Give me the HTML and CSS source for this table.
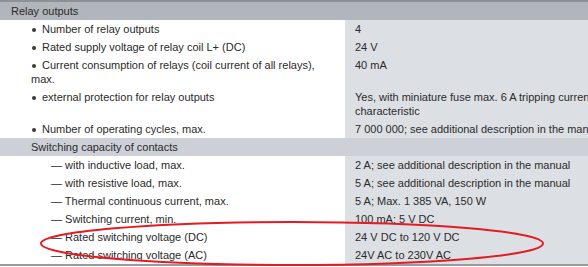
FILE: index.html
```html
<!DOCTYPE html>
<html>
<head>
<meta charset="utf-8">
<link rel="stylesheet" href="styles.css">
</head>
<body>
<div class="page">
<table class="spec">
  <colgroup><col class="c-name"><col class="c-val"></colgroup>
  <tr class="head"><td colspan="2" class="head-cell">Relay outputs</td></tr>
  <tr><td class="name bul"><span class="dot"></span>Number of relay outputs</td><td class="val">4</td></tr>
  <tr><td class="name bul"><span class="dot"></span>Rated supply voltage of relay coil L+ (DC)</td><td class="val">24 V</td></tr>
  <tr><td class="name bul"><span class="dot"></span>Current consumption of relays (coil current of all relays), max.</td><td class="val">40 mA</td></tr>
  <tr><td class="name bul"><span class="dot"></span>external protection for relay outputs</td><td class="val">Yes, with miniature fuse max. 6 A tripping current characteristic</td></tr>
  <tr><td class="name bul"><span class="dot"></span>Number of operating cycles, max.</td><td class="val">7 000 000; see additional description in the manual</td></tr>
  <tr class="sub"><td colspan="2" class="sub-cell">Switching capacity of contacts</td></tr>
  <tr><td class="name dash">— with inductive load, max.</td><td class="val">2 A; see additional description in the manual</td></tr>
  <tr><td class="name dash">— with resistive load, max.</td><td class="val">5 A; see additional description in the manual</td></tr>
  <tr><td class="name dash">— Thermal continuous current, max.</td><td class="val">5 A; Max. 1 385 VA, 150 W</td></tr>
  <tr><td class="name dash">— Switching current, min.</td><td class="val">100 mA; 5 V DC</td></tr>
  <tr><td class="name dash">— Rated switching voltage (DC)</td><td class="val">24 V DC to 120 V DC</td></tr>
  <tr><td class="name dash">— Rated switching voltage (AC)</td><td class="val">24V AC to 230V AC</td></tr>
</table>
<svg class="mark" width="588" height="267" viewBox="0 0 588 267">
  <ellipse cx="292" cy="243.5" rx="251" ry="21.5" fill="none" stroke="#e31b23" stroke-width="2"/>
</svg>
</div>
</body>
</html>
```

FILE: styles.css
```css
html, body {
  margin: 0;
  padding: 0;
  background: #ffffff;
  overflow: hidden;
}
.page {
  position: relative;
  width: 588px;
  height: 267px;
  overflow: hidden;
}
.spec {
  border-collapse: collapse;
  width: 625px;
  table-layout: fixed;
  font-family: "Liberation Sans", Arial, sans-serif;
  font-size: 11px;
  line-height: 14px;
  color: #2b2b2b;
  border-top: 2px solid #8d9096;
  border-bottom: 2px solid #9a9b9e;
}
.c-name { width: 345px; }
.c-val { width: 280px; }
.spec td {
  padding: 2px 10px 2px 0;
  vertical-align: top;
}
.head-cell {
  background: #b1b5bc;
  padding-left: 11px !important;
}
.sub-cell {
  background: #cdd1d7;
  padding-left: 31px !important;
}
.name.bul { padding-left: 31px; }
.name.dash { padding-left: 51px; }
.val {
  background: #dcdfe3;
  padding-left: 10px !important;
}
.dot {
  display: inline-block;
  width: 4px;
  height: 4px;
  border-radius: 50%;
  background: #3a3a3a;
  margin: 0 6px 1px 1px;
  vertical-align: middle;
}
.mark {
  position: absolute;
  left: 0;
  top: 0;
  pointer-events: none;
}
```
